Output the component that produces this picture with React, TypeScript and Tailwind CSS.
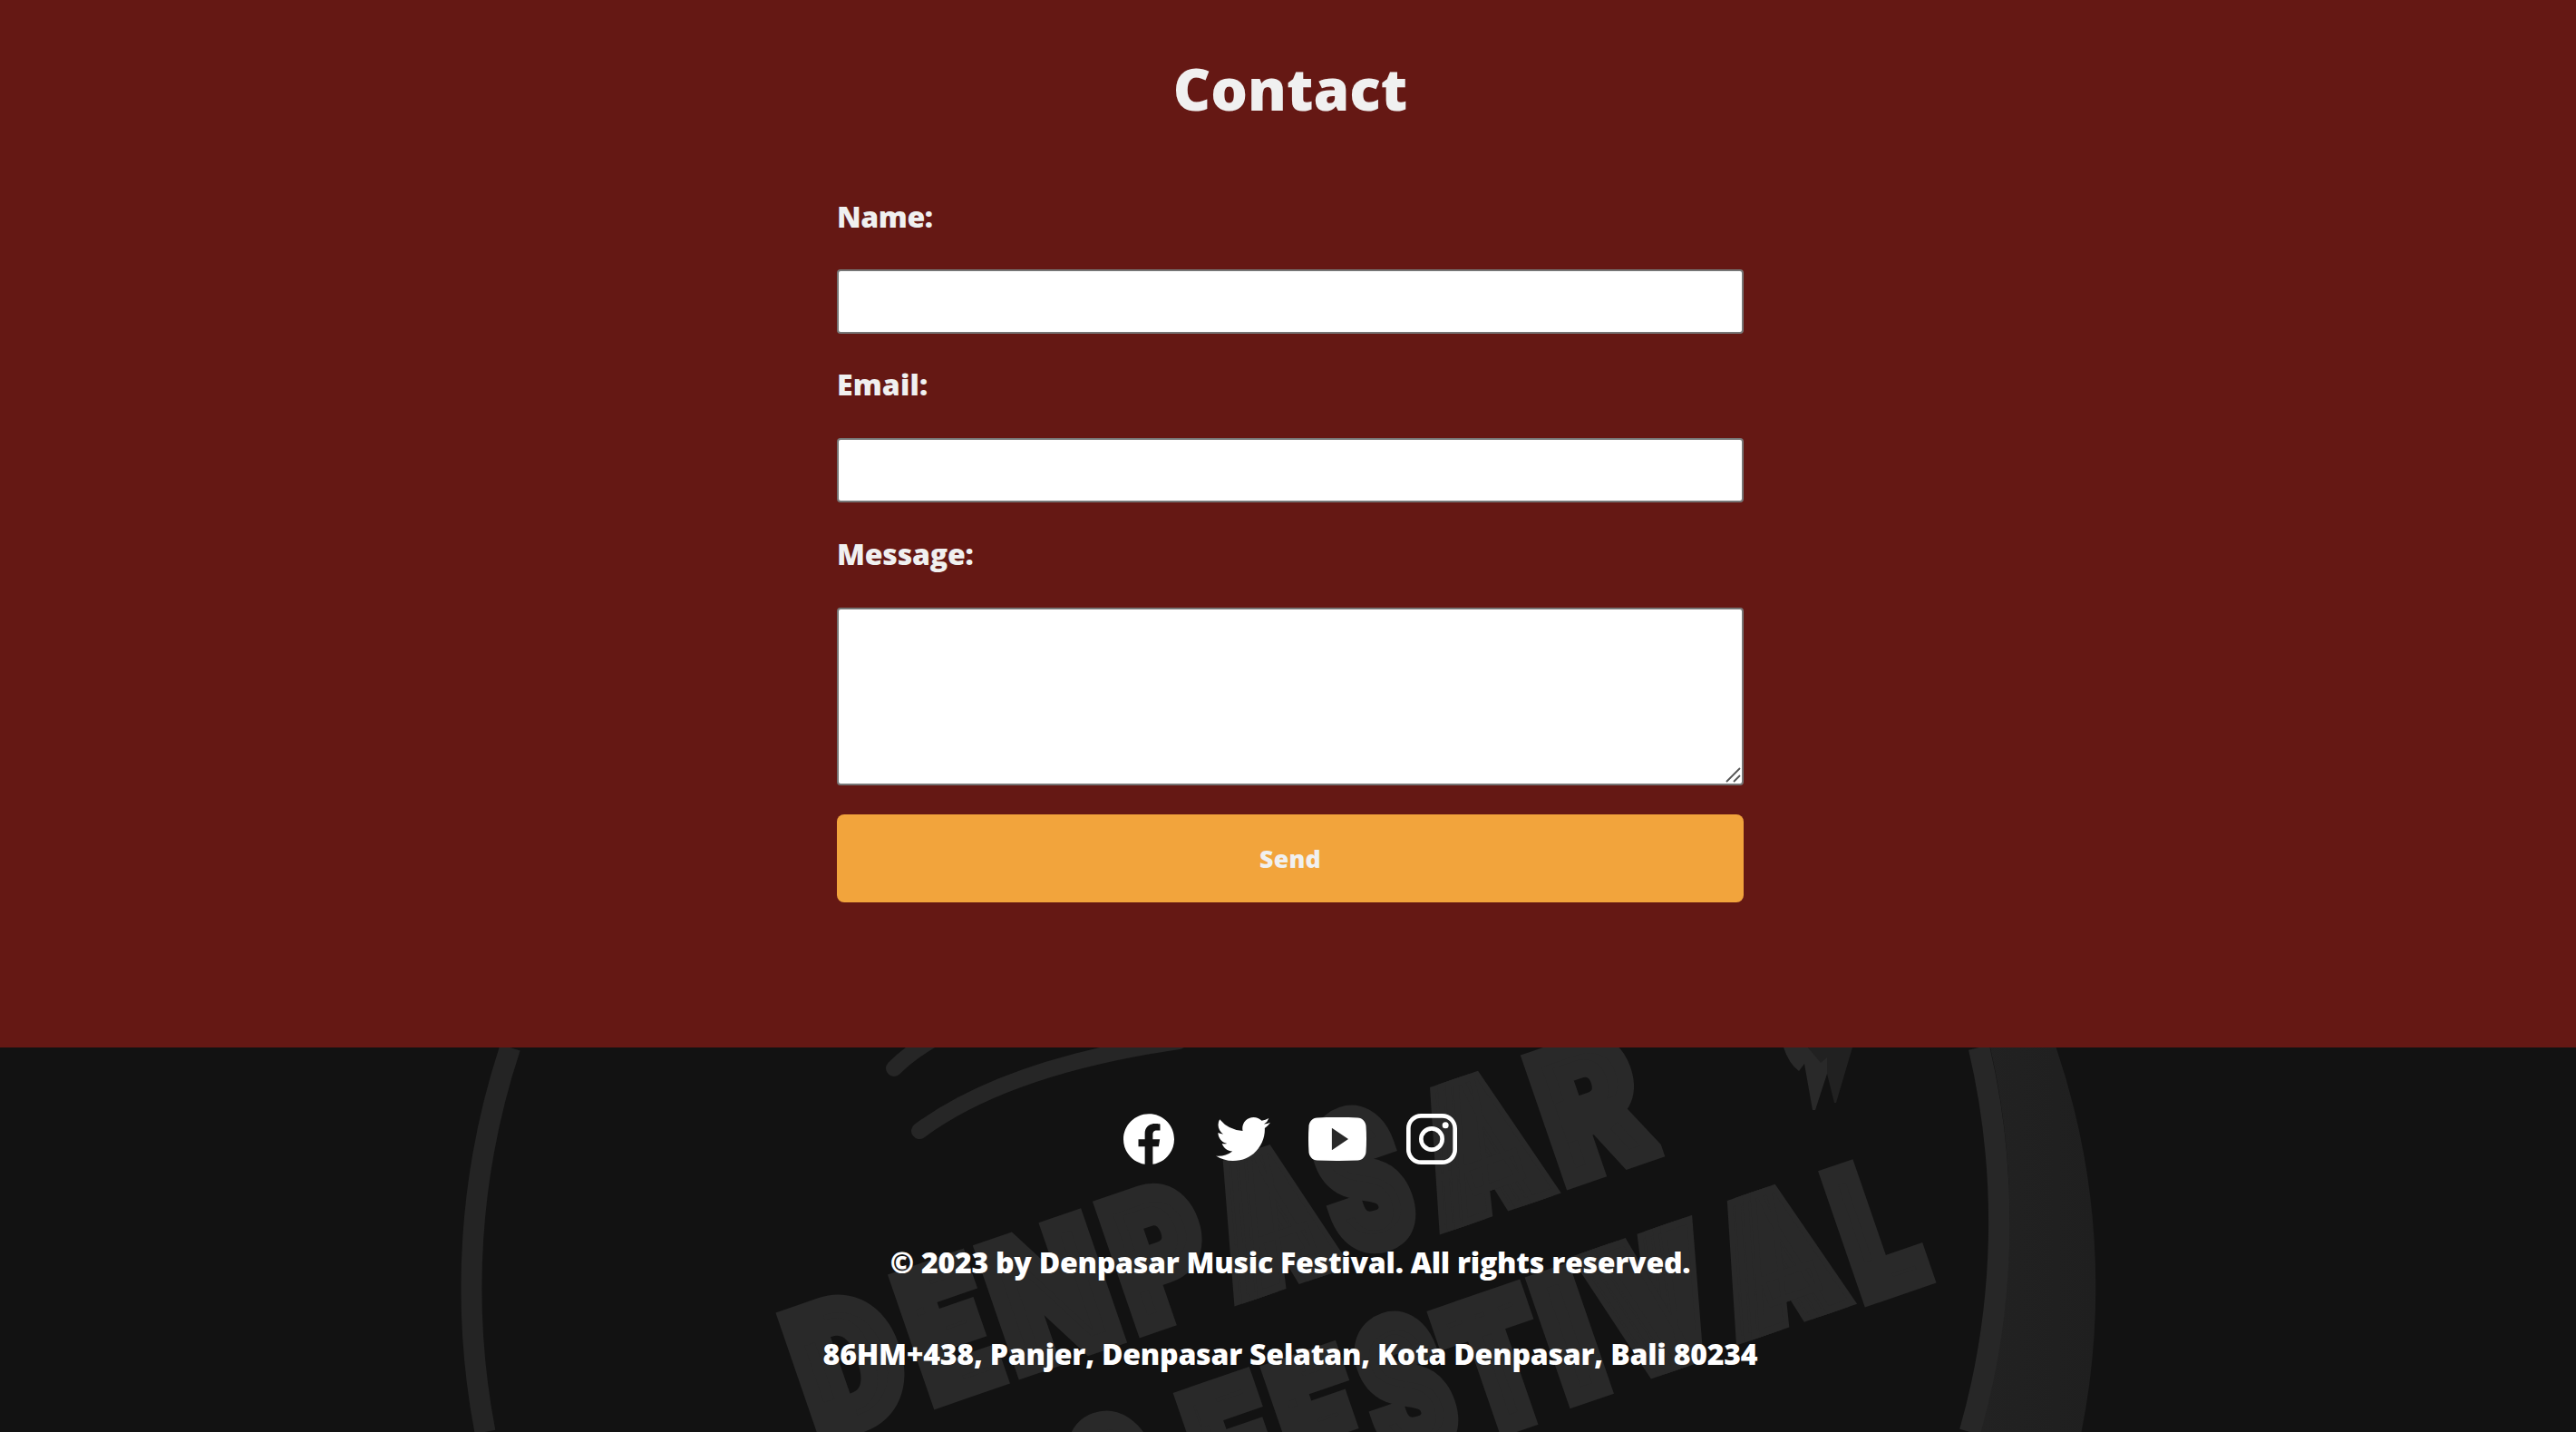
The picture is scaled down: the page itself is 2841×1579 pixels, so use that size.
import { IoLogoFacebook, IoLogoInstagram, IoLogoTwitter, IoLogoYoutube } from "react-icons/io5";

type Letter = { ch: string; x: number; y: number; w: number; h: number };

// x / y is the lower left corner of each stamped letter, w / h its size along the tilted axes.
const LETTERS: Letter[] = [
  { ch: "D", x: 905, y: 1595, w: 119, h: 156 },
  { ch: "E", x: 1028, y: 1554, w: 92, h: 156 },
  { ch: "N", x: 1122.7, y: 1521.7, w: 128, h: 157 },
  { ch: "P", x: 1255, y: 1476, w: 107, h: 158 },
  { ch: "A", x: 1361.5, y: 1440, w: 135, h: 156 },
  { ch: "S", x: 1483, y: 1395, w: 98, h: 166 },
  { ch: "A", x: 1587.8, y: 1361, w: 141, h: 157 },
  { ch: "R", x: 1727, y: 1313.3, w: 117, h: 158 },
  { ch: "C", x: 1209, y: 1731, w: 105, h: 164 },
  { ch: "F", x: 1343, y: 1685, w: 92, h: 157 },
  { ch: "E", x: 1438.6, y: 1656, w: 92, h: 157 },
  { ch: "S", x: 1530, y: 1622, w: 98, h: 166 },
  { ch: "T", x: 1623, y: 1595, w: 112, h: 157 },
  { ch: "I", x: 1731.4, y: 1553.3, w: 52, h: 154 },
  { ch: "V", x: 1783, y: 1533, w: 141, h: 156 },
  { ch: "A", x: 1915, y: 1483, w: 140, h: 154 },
  { ch: "L", x: 2054.3, y: 1441, w: 87, h: 157 },
];

const TILT = -19;
const FONT = "900 200px Roboto, sans-serif";

// A and V get their blunt tips from copies laid side by side.
function StampLetter({ letter, ctx }: { letter: Letter; ctx: CanvasRenderingContext2D }) {
  ctx.font = FONT;
  const m = ctx.measureText(letter.ch);
  const blunt = letter.ch === "A" || letter.ch === "V";
  const stroke = blunt ? 7 : 19;
  const shifts = blunt ? [0, 9, 18, 27] : [0];
  const spread = shifts[shifts.length - 1];
  const gw = m.actualBoundingBoxRight + m.actualBoundingBoxLeft;
  const gh = m.actualBoundingBoxAscent + m.actualBoundingBoxDescent;
  const sx = (letter.w - stroke - spread) / gw;
  const sy = (letter.h - stroke) / gh;
  return (
    <>
      {shifts.map((s) => (
        <text
          key={s}
          className="[font:900_200px_Roboto,sans-serif]"
          fill="#292929"
          stroke="#292929"
          strokeWidth={stroke}
          vectorEffect="non-scaling-stroke"
          transform={`translate(${letter.x} ${letter.y}) rotate(${TILT}) translate(${stroke / 2 + s} ${-stroke / 2}) scale(${sx} ${sy}) translate(${m.actualBoundingBoxLeft} ${-m.actualBoundingBoxDescent})`}
        >
          {letter.ch}
        </text>
      ))}
    </>
  );
}

function Watermark() {
  const ctx = document.createElement("canvas").getContext("2d")!;
  return (
    <svg className="absolute inset-0" width={2846} height={424} viewBox="0 1155 2846 424" aria-hidden="true">
      <defs>
        <linearGradient id="rim" x1="0" x2="1" y1="0" y2="0">
          <stop offset="0" stopColor="#222222" />
          <stop offset="1" stopColor="#1f1f1f" />
        </linearGradient>
      </defs>
      <path d="M2267.6 1155A820 820 0 0 1 2295.5 1579H2183A844 844 0 0 0 2195 1155Z" fill="url(#rim)" />
      <path d="M2182.5 1155A844 844 0 0 1 2172.5 1579" fill="none" stroke="#272727" strokeWidth="23.5" />
      <path d="M562.7 1155A844 844 0 0 0 535 1579" fill="none" stroke="#242424" strokeWidth="23" />
      <g fill="none" stroke="#262626" strokeWidth="18" strokeLinecap="round">
        <path d="M986 1178Q1004 1160 1032 1144" />
        <path d="M1014 1247Q1110 1176 1300 1148" />
      </g>
      <path d="M1994 1155H2043L2025 1216H2023L2015 1184Z" fill="#212121" />
      <path d="M1967 1155Q1973 1173 1984 1181L1990 1173L1999 1224H2002L2015 1184V1166L2008 1172L1994 1155Z" fill="#292929" />
      {LETTERS.map((l, i) => (
        <StampLetter key={i} letter={l} ctx={ctx} />
      ))}
    </svg>
  );
}

const field = "block w-full rounded-[4px] border-2 border-[#767676] bg-white outline-none";
const label = "block h-[44px] text-[32px] leading-[44px] font-extrabold";

export default function App() {
  return (
    <div className="h-[1579px] w-full overflow-hidden font-['Open_Sans',sans-serif] text-[#f0f0f0]">
      <div className="w-[2846px]">
        <section className="h-[1155px] bg-[#651814] pt-[54px]">
          <h1 className="text-center text-[64px] leading-[88px] font-extrabold">Contact</h1>
          <form className="mx-auto w-[1000px] pt-[75px]" onSubmit={(e) => e.preventDefault()}>
            <label className={`${label} tracking-[-0.4px]`} htmlFor="name">Name:</label>
            <input id="name" className={`${field} mt-[36px] h-[71px]`} />
            <label className={`${label} mt-[34px] tracking-[0.15px]`} htmlFor="email">Email:</label>
            <input id="email" className={`${field} mt-[37px] h-[71px]`} />
            <label className={`${label} mt-[35px] tracking-[-0.2px]`} htmlFor="message">Message:</label>
            <div className="relative mt-[37px]">
              <textarea id="message" className={`${field} h-[196px] resize-none`} />
              <svg className="absolute right-[3px] bottom-[3px]" width="17" height="17" viewBox="0 0 17 17" stroke="#555" strokeWidth="1.8">
                <path d="M1 16L16 1M9 16L16 9" />
              </svg>
            </div>
            <button className="mt-[32px] block h-[97px] w-full rounded-[8px] bg-[#f2a43c] text-[26.67px] font-extrabold tracking-[0.3px]">
              Send
            </button>
          </form>
        </section>
        <footer className="relative h-[424px] bg-[#121212] text-white">
          <Watermark />
          <div className="relative flex flex-col items-center pt-[69px]">
            <nav className="flex gap-[40px]">
              <IoLogoFacebook size={64} />
              <IoLogoTwitter size={64} />
              <IoLogoYoutube size={64} />
              <IoLogoInstagram size={64} />
            </nav>
            <p className="mt-[82px] text-[32px] leading-[44px] font-extrabold tracking-[-0.24px] whitespace-nowrap">
              © 2023 by Denpasar Music Festival. All rights reserved.
            </p>
            <p className="mt-[57px] text-[32px] leading-[44px] font-extrabold tracking-[-0.21px] whitespace-nowrap">
              86HM+438, Panjer, Denpasar Selatan, Kota Denpasar, Bali 80234
            </p>
          </div>
        </footer>
      </div>
    </div>
  );
}
